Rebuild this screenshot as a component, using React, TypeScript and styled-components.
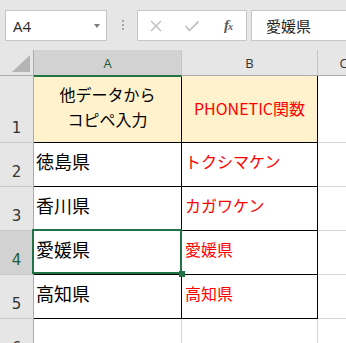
import React from 'react';
import styled, { createGlobalStyle } from 'styled-components';

const GlobalStyle = createGlobalStyle`
  html, body { margin: 0; padding: 0; background: #e6e6e6; }
  body { overflow: hidden; }
`;

const Window = styled.div`
  width: 346px;
  height: 343px;
  overflow: hidden;
  background: #e6e6e6;
  display: flex;
  flex-direction: column;
  font-family: "Noto Sans CJK JP", sans-serif;
`;

const Toolbar = styled.div`
  height: 50px;
  flex: none;
  box-sizing: border-box;
  display: flex;
  align-items: flex-start;
  padding: 10px 0 0 5px;
`;

const Field = styled.div`
  flex: none;
  height: 31px;
  box-sizing: border-box;
  border: 1px solid #c6c6c6;
  background: #fff;
  display: flex;
  align-items: center;
`;

const NameBox = styled(Field)`
  width: 102px;
  padding: 0 6px 0 7px;
  justify-content: space-between;
  font-family: "Open Sans", sans-serif;
  font-size: 15px;
  color: #262626;
`;

const Caret = styled.span`
  width: 0;
  height: 0;
  border-left: 3.5px solid transparent;
  border-right: 3.5px solid transparent;
  border-top: 4px solid #7a7a7a;
`;

const Grip = styled.div`
  flex: none;
  display: flex;
  flex-direction: column;
  gap: 2px;
  margin: 10px 0 0 15px;
`;

const GripDot = styled.span`
  width: 2px;
  height: 2px;
  background: #a6a6a6;
`;

const ButtonBox = styled(Field)`
  width: 110px;
  margin-left: 13px;
  display: grid;
  grid-template-columns: 36px 36px 36px;
  align-items: center;
  justify-items: center;
`;

const Fx = styled.span`
  font-family: "Liberation Serif", serif;
  font-style: italic;
  font-weight: bold;
  font-size: 15px;
  color: #5a5a5a;
  letter-spacing: -1px;
  line-height: 1;
`;

const FxSub = styled.span`
  font-size: 10px;
`;

const FormulaBox = styled(Field)`
  width: 130px;
  margin-left: 4px;
  padding-left: 14px;
  font-size: 15px;
  color: #262626;
`;

const Sheet = styled.div`
  display: grid;
  grid-template-columns: 34px 148px 136px 52px;
  grid-template-rows: 26px 67px 44px 44px 44px 44px 44px;
`;

const Corner = styled.div`
  box-sizing: border-box;
  border-right: 1px solid #ababab;
  border-bottom: 1px solid #ababab;
  display: flex;
  align-items: flex-end;
  justify-content: flex-end;
  padding: 0 3px 3px 0;
`;

const CornerTriangle = styled.span`
  width: 0;
  height: 0;
  border-left: 18px solid transparent;
  border-bottom: 17px solid #b4b4b4;
`;

const ColHead = styled.div<{ $sel?: boolean }>`
  position: relative;
  z-index: ${(p) => (p.$sel ? 1 : 0)};
  box-sizing: border-box;
  background: ${(p) => (p.$sel ? '#d2d2d2' : '#e6e6e6')};
  border-right: 1px solid #c6c6c6;
  border-bottom: 1px solid ${(p) => (p.$sel ? '#217346' : '#ababab')};
  box-shadow: ${(p) => (p.$sel ? '0 1px 0 #217346' : 'none')};
  display: flex;
  align-items: center;
  justify-content: center;
  font-family: "Open Sans", sans-serif;
  font-size: 13px;
  color: ${(p) => (p.$sel ? '#1d5e3b' : '#333')};
`;

const RowHead = styled.div<{ $sel?: boolean }>`
  box-sizing: border-box;
  background: ${(p) => (p.$sel ? '#d2d2d2' : '#e6e6e6')};
  border-right: 1px solid ${(p) => (p.$sel ? '#217346' : '#ababab')};
  border-bottom: 1px solid #c8c8c8;
  display: flex;
  align-items: flex-end;
  justify-content: center;
  padding-bottom: 6px;
  font-family: "DejaVu Sans", sans-serif;
  font-size: 15px;
  line-height: 1;
  color: ${(p) => (p.$sel ? '#1d5e3b' : '#333')};
`;

const Cell = styled.div<{
  $fill?: boolean;
  $edge?: 'black' | 'grid';
  $center?: boolean;
  $red?: boolean;
  $big?: boolean;
  $pb?: number;
}>`
  position: relative;
  box-sizing: border-box;
  background: ${(p) => (p.$fill ? '#fff2cc' : '#fff')};
  border-right: 1px solid ${(p) => (p.$edge === 'black' ? '#000' : '#d4d4d4')};
  border-bottom: 1px solid ${(p) => (p.$edge === 'black' ? '#000' : '#d4d4d4')};
  display: flex;
  align-items: center;
  justify-content: ${(p) => (p.$center ? 'center' : 'flex-start')};
  text-align: ${(p) => (p.$center ? 'center' : 'left')};
  padding: 0 0 ${(p) => p.$pb ?? 7}px ${(p) => (p.$center ? 0 : p.$big ? 2 : 3)}px;
  font-size: ${(p) => (p.$big ? 18 : 16)}px;
  color: ${(p) => (p.$red ? '#ff0000' : '#000')};
  white-space: nowrap;
`;

const TwoLine = styled.div`
  line-height: 25px;
`;

const Selection = styled.div`
  position: absolute;
  z-index: 2;
  top: -2px;
  left: -2px;
  right: -1px;
  bottom: 0;
  border: 2px solid #217346;
  pointer-events: none;
`;

const Handle = styled.div`
  position: absolute;
  z-index: 3;
  left: 145px;
  top: 40px;
  width: 6px;
  height: 6px;
  background: #217346;
`;

const CloseIcon = () => (
  <svg width="14" height="12" viewBox="0 0 14 12">
    <path d="M2 1 L12 11 M12 1 L2 11" stroke="#c4c4c4" strokeWidth="1.6" fill="none" />
  </svg>
);

const CheckIcon = () => (
  <svg width="16" height="12" viewBox="0 0 16 12">
    <path d="M1.5 6 L5.5 10.5 L14.5 1.5" stroke="#c4c4c4" strokeWidth="1.8" fill="none" />
  </svg>
);

type Row = { n: number; a: string[]; b: string; sel?: boolean; big?: boolean };

const rows: Row[] = [
  { n: 2, a: ['徳島県'], b: 'トクシマケン' },
  { n: 3, a: ['香川県'], b: 'カガワケン' },
  { n: 4, a: ['愛媛県'], b: '愛媛県', sel: true },
  { n: 5, a: ['高知県'], b: '高知県' },
];

export default function App() {
  return (
    <Window>
      <GlobalStyle />
      <Toolbar>
        <NameBox>
          A4
          <Caret />
        </NameBox>
        <Grip>
          <GripDot />
          <GripDot />
          <GripDot />
        </Grip>
        <ButtonBox>
          <CloseIcon />
          <CheckIcon />
          <Fx>
            f<FxSub>x</FxSub>
          </Fx>
        </ButtonBox>
        <FormulaBox>愛媛県</FormulaBox>
      </Toolbar>
      <Sheet>
        <Corner>
          <CornerTriangle />
        </Corner>
        <ColHead $sel>A</ColHead>
        <ColHead>B</ColHead>
        <ColHead>C</ColHead>

        <RowHead>1</RowHead>
        <Cell $fill $edge="black" $center $pb={5}>
          <TwoLine>
            他データから
            <br />
            コピペ入力
          </TwoLine>
        </Cell>
        <Cell $fill $edge="black" $center $red $pb={2}>
          PHONETIC関数
        </Cell>
        <Cell $edge="grid" />

        {rows.map((r) => (
          <React.Fragment key={r.n}>
            <RowHead $sel={r.sel}>{r.n}</RowHead>
            <Cell $edge="black" $big>
              {r.a[0]}
              {r.sel && (
                <>
                  <Selection />
                  <Handle />
                </>
              )}
            </Cell>
            <Cell $edge="black" $red>
              {r.b}
            </Cell>
            <Cell $edge="grid" />
          </React.Fragment>
        ))}

        <RowHead>6</RowHead>
        <Cell $edge="grid" />
        <Cell $edge="grid" />
        <Cell $edge="grid" />
      </Sheet>
    </Window>
  );
}
